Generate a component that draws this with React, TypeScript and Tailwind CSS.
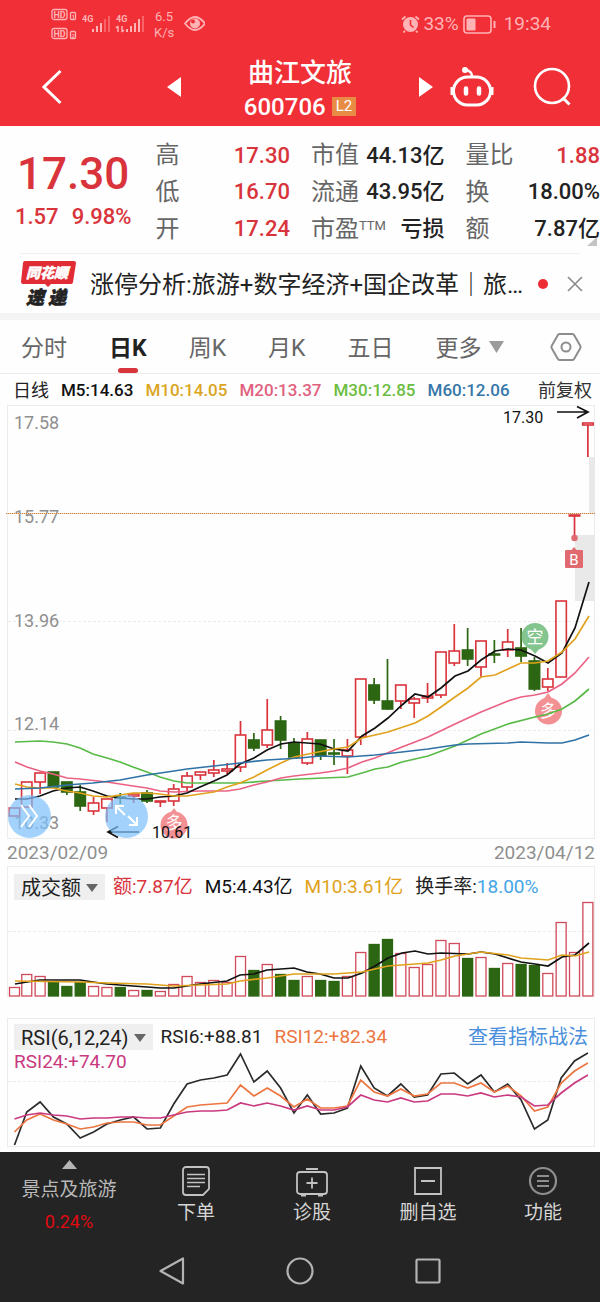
import { useState } from 'react';
import type { ReactNode } from 'react';
import clsx from 'clsx';

const RED = '#d9333b';
const GREEN = '#2d6613';

// [rising, body top, body bottom, high, low]
type Candle = [boolean, number, number, number, number];

const candles: Candle[] = [
  [true, 808, 816, 808, 816],
  [true, 782, 807, 782, 807],
  [true, 773, 782, 773, 794],
  [false, 772, 787, 772, 787],
  [false, 782, 792, 782, 795],
  [false, 792, 806, 785, 811],
  [true, 803, 811, 797, 815],
  [true, 799, 808, 799, 822],
  [false, 797, 798, 793, 804],
  [true, 794, 796, 794, 803],
  [false, 793, 801, 790, 803],
  [true, 801, 802, 801, 807],
  [true, 789, 801, 784, 806],
  [true, 776, 787, 772, 791],
  [true, 772, 775, 772, 780],
  [true, 770, 773, 760, 777],
  [true, 769, 771, 763, 774],
  [true, 735, 767, 721, 772],
  [false, 740, 748, 733, 751],
  [true, 730, 745, 699, 748],
  [false, 721, 740, 716, 749],
  [false, 743, 757, 738, 757],
  [true, 739, 763, 732, 765],
  [false, 740, 756, 740, 760],
  [false, 753, 754, 739, 765],
  [true, 750, 756, 739, 774],
  [true, 679, 737, 679, 745],
  [false, 685, 700, 678, 704],
  [false, 701, 709, 659, 710],
  [true, 685, 701, 685, 709],
  [true, 699, 703, 697, 718],
  [true, 696, 698, 683, 703],
  [true, 652, 695, 652, 698],
  [true, 651, 663, 624, 666],
  [false, 650, 659, 628, 666],
  [true, 641, 667, 641, 677],
  [false, 654, 655, 640, 663],
  [true, 642, 650, 629, 657],
  [false, 648, 656, 628, 662],
  [false, 661, 689, 657, 691],
  [true, 679, 687, 668, 691],
  [true, 601, 677, 601, 677],
  [true, 515, 516, 515, 535],
  [true, 423, 425, 423, 457],
];

const volumeTops = [
  987, 974, 976, 982, 986, 982, 986, 987, 987, 990, 990, 991, 984, 976, 982, 980, 982, 956, 970, 964, 974, 980,
  976, 980, 981, 976, 952, 944, 939, 953, 967, 964, 940, 943, 958, 957, 968, 963, 964, 965, 973, 922, 952, 902,
];

const rsi6 = [
  1145, 1112, 1102, 1117, 1124, 1138, 1132, 1124, 1120, 1117, 1129, 1128, 1104, 1084, 1080, 1078, 1075, 1054, 1082, 1071, 1088, 1113,
  1095, 1114, 1113, 1108, 1066, 1088, 1096, 1084, 1097, 1095, 1074, 1073, 1084, 1075, 1092, 1084, 1100, 1129, 1120, 1078, 1061, 1053,
];
const rsi12 = [
  1132, 1120, 1114, 1120, 1124, 1129, 1127, 1123, 1122, 1122, 1125, 1125, 1116, 1107, 1105, 1104, 1103, 1085, 1096, 1088, 1096, 1107,
  1099, 1108, 1108, 1106, 1080, 1092, 1096, 1089, 1096, 1094, 1083, 1083, 1088, 1083, 1092, 1086, 1096, 1111, 1107, 1083, 1071, 1063,
];
const rsi24 = [
  1119, 1115, 1113, 1115, 1116, 1119, 1118, 1118, 1117, 1117, 1118, 1118, 1115, 1112, 1111, 1111, 1110, 1103, 1106, 1103, 1106, 1110,
  1106, 1110, 1110, 1107, 1095, 1100, 1102, 1098, 1102, 1101, 1094, 1094, 1096, 1093, 1097, 1095, 1097, 1106, 1105, 1093, 1083, 1075,
];

const averages = [
  { color: '#58ba47', points: '15,742 40,741 53,742 67,744 80,748 93,754 107,758 120,762 133,767 147,772 160,777 174,781 187,783 214,783 240,783 267,781 300,779 348,777 362,773 375,769 388,767 402,762 428,756 455,746 481,734 508,724 535,717 548,714 562,709 575,701 589,689' },
  { color: '#ea6284', points: '15,762 27,767 40,771 53,774 67,778 80,779 107,782 133,786 147,788 160,791 174,792 200,791 227,791 240,789 254,785 267,782 281,778 294,776 320,773 334,771 348,768 362,762 375,758 402,747 428,737 455,724 481,712 508,701 521,697 535,695 548,692 562,684 575,673 589,657' },
  { color: '#111111', points: '15,799 27,799 40,796 53,791 67,788 80,787 93,791 107,796 120,798 133,799 147,799 160,797 174,796 187,793 200,787 214,781 227,775 240,764 254,758 267,750 281,744 294,742 307,743 320,744 334,749 348,751 362,736 375,728 388,718 402,705 415,694 428,697 441,688 455,676 468,671 481,660 495,651 508,649 521,650 535,656 548,663 562,653 575,628 589,582' },
  { color: '#e0a21c', points: '15,784 27,787 40,788 53,788 67,791 80,793 93,796 107,797 120,795 133,793 147,793 160,794 174,796 187,796 200,794 214,792 227,787 240,783 254,777 267,770 281,763 294,757 313,753 334,749 348,747 362,738 375,735 388,732 415,723 428,716 441,707 455,697 468,688 481,677 495,675 508,669 521,663 535,663 548,661 562,652 575,639 589,616' },
  { color: '#2f72a6', points: '15,789 40,788 67,785 93,783 120,780 147,775 174,771 187,769 214,766 240,763 267,760 300,758 320,756 348,757 375,755 402,752 428,749 455,745 468,744 508,743 521,742 548,743 562,743 575,740 589,735' },
];

const volumeAverages = [
  { color: '#111111', points: '15,984 27,982 40,980 67,980 80,980 93,982 107,984 133,986 147,987 160,988 174,988 187,986 200,984 227,981 240,975 254,974 267,970 281,969 294,968 307,972 320,974 334,978 348,978 362,973 375,966 388,958 402,953 415,951 428,954 441,953 468,954 481,952 495,954 508,958 521,962 535,964 548,966 562,957 575,955 589,943' },
  { color: '#e0a21c', points: '15,981 80,982 107,983 147,984 160,985 174,986 200,985 227,984 240,981 267,978 294,974 320,974 334,974 362,972 388,966 415,964 428,963 441,960 455,956 481,952 508,955 521,958 535,959 548,960 562,955 575,956 589,952' },
];

const slotX = (i: number) => (i === 0 ? 14.5 : 13.4 + i * 13.36);
const seriesPoints = (ys: number[]) => ys.map((y, i) => `${slotX(i)},${y}`).join(' ');

const tabs = ['分时', '日K', '周K', '月K', '五日'];

const quoteColumns = [
  [
    { label: '高', value: '17.30', up: true },
    { label: '低', value: '16.70', up: true },
    { label: '开', value: '17.24', up: true },
  ],
  [
    { label: '市值', value: '44.13亿' },
    { label: '流通', value: '43.95亿' },
    { label: '市盈', sup: 'TTM', value: '亏损' },
  ],
  [
    { label: '量比', value: '1.88', up: true },
    { label: '换', value: '18.00%' },
    { label: '额', value: '7.87亿' },
  ],
] as { label: string; value: string; sup?: string; up?: boolean }[][];

export default function App() {
  const [tab, setTab] = useState('日K');
  const [showNews, setShowNews] = useState(true);

  return (
    <div className="w-full overflow-x-hidden bg-[#fefefe] font-['Roboto','Noto_Sans_CJK_SC',sans-serif] text-[#222]">
      <header className="h-[126px] bg-[#f12f37] text-white">
        <StatusBar />
        <TitleBar />
      </header>

      <Quote />

      {showNews && (
        <section className="mx-5 flex h-[60px] items-center border-t border-[#f0f0f0]">
          <NewsLogo />
          <a href="#news" className="ml-[14px] min-w-0 flex-1 pt-[3px] text-[24px] whitespace-nowrap">
            涨停分析:旅游+数字经济+国企改革｜旅…
          </a>
          <span className="size-[10px] flex-none rounded-full bg-[#ee2d35]" />
          <button aria-label="关闭" className="ml-[18px] -mr-1 flex-none" onClick={() => setShowNews(false)}>
            <svg width="18" height="18" viewBox="0 0 18 18" stroke="#8a8a8a" strokeWidth="1.6">
              <path d="M2 2l14 14M16 2L2 16" />
            </svg>
          </button>
        </section>
      )}
      <div className="h-[7px] bg-[#f4f4f4]" />

      {/* Period tabs */}
      <nav className="flex h-[54px] items-stretch gap-[42px] border-b border-[#ebebeb] pr-[18px] pl-[21px] text-[23px] whitespace-nowrap text-[#666]">
        {tabs.map((t) => (
          <button
            key={t}
            className={clsx('relative pt-[5px]', t === tab && 'font-bold text-[#222]')}
            onClick={() => setTab(t)}
          >
            {t}
            {t === tab && (
              <span className="absolute bottom-0 left-1/2 h-[5px] w-5 -translate-x-1/2 rounded-full bg-[#d9333b]" />
            )}
          </button>
        ))}
        <button className="flex items-center gap-[7px] pt-[5px]">
          更多
          <svg className="mb-1" width="15" height="12" viewBox="0 0 15 12" fill="#9b9b9b">
            <path d="M0 0h15L7.500 12z" />
          </svg>
        </button>
        <button aria-label="设置" className="ml-auto">
          <svg width="32" height="30" viewBox="0 0 32 30" fill="none" stroke="#8d8d8d" strokeWidth="2">
            <path d="M9.500 2h13a2 2 0 0 1 1.600 1l6 10.500a3 3 0 0 1 0 3L24.100 27a2 2 0 0 1-1.600 1h-13a2 2 0 0 1-1.600-1L1.900 16.500a3 3 0 0 1 0-3L7.900 3a2 2 0 0 1 1.600-1z" />
            <circle cx="16" cy="15" r="4.500" />
          </svg>
        </button>
      </nav>

      <div className="flex h-[31px] items-center gap-3 pt-[2px] pr-2 pl-[13px] text-[17px] font-medium whitespace-nowrap">
        <span className="text-[18px] font-normal text-[#222]">日线</span>
        <span className="text-[#111]">M5:14.63</span>
        <span className="text-[#dba522]">M10:14.05</span>
        <span className="text-[#e0607e]">M20:13.37</span>
        <span className="text-[#6cbd3f]">M30:12.85</span>
        <span className="text-[#3577a8]">M60:12.06</span>
        <button className="ml-auto text-[18px] font-normal text-[#333]">前复权</button>
      </div>

      <PriceChart />
      <div className="flex h-[27px] items-center justify-between pt-[2px] pr-[5px] pl-[7px] text-[19px] text-[#8f8f8f]">
        <span>2023/02/09</span>
        <span>2023/04/12</span>
      </div>
      <VolumeChart />
      <RsiChart />
      <BottomNav />
    </div>
  );
}

function StatusBar() {
  return (
    <div className="flex h-12 items-center pr-[49px] pl-[51px] text-[#ffb3b5]">
      <svg width="154" height="32" viewBox="0 0 154 32" fill="none" stroke="currentColor">
        <g strokeWidth="1.300">
          <rect x="1" y="1.500" width="15" height="10" rx="2" />
          <rect x="1" y="20.500" width="15" height="10" rx="2" />
          <rect x="19.500" y="4.500" width="5" height="7" rx="1" />
          <rect x="19.500" y="23.500" width="5" height="7" rx="1" />
        </g>
        <g fill="currentColor" stroke="none" fontWeight="700">
          <text x="2.500" y="10" fontSize="9">HD</text>
          <text x="2.500" y="29" fontSize="9">HD</text>
          <text x="20.500" y="10.500" fontSize="6">1</text>
          <text x="20.500" y="29.500" fontSize="6">2</text>
          <text x="31" y="14" fontSize="9">4G</text>
          <text x="65" y="14" fontSize="9">4G</text>
        </g>
        <path d="M42 24v-3M46 24v-6M50 24v-9" strokeWidth="2" />
        <path d="M54 24v-13M58 24v-16M92 24v-16" strokeWidth="2" opacity="0.4" />
        <path d="M76 24v-3M80 24v-6M84 24v-9M88 24v-13" strokeWidth="2" />
        <path d="M67 18v6M67 18l-2 2M71 18v6M71 24l2-2" strokeWidth="1.500" />
        <g fill="currentColor" stroke="none" fontSize="13">
          <text x="104" y="13">6.5</text>
          <text x="103" y="29">K/s</text>
        </g>
        <path d="M134 15.500c4-5 7-6.500 10-6.500s6 1.500 10 6.500c-4 5-7 6.500-10 6.500s-6-1.500-10-6.500z" strokeWidth="1.800" />
        <circle cx="144" cy="15.500" r="5" fill="currentColor" stroke="none" />
        <circle cx="142" cy="13.500" r="2" fill="#f12f37" stroke="none" />
      </svg>
      <svg className="ml-auto" width="19" height="18" viewBox="0 0 19 18" fill="none" stroke="currentColor">
        <circle cx="9.500" cy="9.500" r="7.500" fill="currentColor" stroke="none" />
        <path d="M9.500 5v5l3 2.500" stroke="#f12f37" strokeWidth="1.600" />
        <path d="M1 4.500L4.500 1.500M18 4.500L14.500 1.500M4 16l-1.500 1.500M15 16l1.500 1.500" strokeWidth="1.800" />
      </svg>
      <span className="ml-[3px] text-[19px]">33%</span>
      <svg className="ml-1" width="33" height="19" viewBox="0 0 33 19" fill="none" stroke="currentColor" strokeWidth="1.600">
        <rect x="1" y="1" width="27" height="17" rx="3" />
        <rect x="3.500" y="3.500" width="9" height="12" rx="1" fill="currentColor" stroke="none" />
        <path d="M31.500 6v7" strokeWidth="2" />
      </svg>
      <span className="ml-2 text-[19px]">19:34</span>
    </div>
  );
}

function TitleBar() {
  return (
    <div className="grid h-[78px] grid-cols-[1fr_auto_1fr] items-center pb-px">
      <div className="flex items-center justify-between pl-[42px]">
        <button aria-label="返回">
          <svg width="20" height="36" viewBox="0 0 20 36" fill="none" stroke="#fff" strokeWidth="3">
            <path d="M18.500 2L2 18l16.500 16" />
          </svg>
        </button>
        <button aria-label="上一只">
          <svg width="14" height="20" viewBox="0 0 14 20" fill="#fff">
            <path d="M14 0v20L0 10z" />
          </svg>
        </button>
      </div>
      <div className="mx-[63px] pt-2 text-center whitespace-nowrap">
        <h1 className="text-[26px] leading-8 font-medium">曲江文旅</h1>
        <p className="flex items-center justify-center gap-[6px] text-[24px] leading-9 font-medium">
          600706
          <span className="bg-[#e88b45] px-1 text-[15px] leading-[19px] font-normal">L2</span>
        </p>
      </div>
      <div className="flex items-center pr-[28px]">
        <button aria-label="下一只">
          <svg width="14" height="20" viewBox="0 0 14 20" fill="#fff">
            <path d="M0 0v20l14-10z" />
          </svg>
        </button>
        <button aria-label="智能助手" className="ml-[17px]">
          <svg width="44" height="42" viewBox="0 0 44 42" fill="none" stroke="#fff" strokeWidth="3">
            <rect x="3.500" y="11" width="37" height="28" rx="14" />
            <path d="M2 21v8M42 21v8" />
            <path d="M22 10c0-3-2-5-6-6" strokeWidth="2.500" />
            <circle cx="15" cy="4" r="3" fill="#fff" stroke="none" />
            <path d="M16 22.500v5M29 22.500v5" strokeWidth="4.500" strokeLinecap="round" />
          </svg>
        </button>
        <button aria-label="搜索" className="ml-auto">
          <svg width="39" height="39" viewBox="0 0 39 39" fill="none" stroke="#fff" strokeWidth="2.600">
            <circle cx="19" cy="19" r="17" />
            <path d="M29.500 30.500l7 7" strokeWidth="3" />
          </svg>
        </button>
      </div>
    </div>
  );
}

function Quote() {
  return (
    <section className="relative grid h-[127px] grid-cols-[135fr_135fr_134fr_135fr] gap-[21px] overflow-hidden pt-[11px] pb-[6px] whitespace-nowrap">
      <div className="pt-2 pl-[15px] font-medium text-[#d9333b]">
        <p className="pl-[2px] text-[44px] leading-[58px]">17.30</p>
        <p className="flex gap-[13px] text-[22px] leading-7">
          <span>1.57</span>
          <span>9.98%</span>
        </p>
      </div>
      {quoteColumns.map((rows, c) => (
        <dl key={c} className="grid grid-rows-3">
          {rows.map((row) => (
            <div key={row.label} className="flex items-center justify-between">
              <dt className="flex text-[24px] text-[#666]">
                {row.label}
                {row.sup && <sup className="top-[8px] text-[13px] leading-none">{row.sup}</sup>}
              </dt>
              <dd className={clsx('text-[22px] font-medium', row.up ? 'text-[#d9333b]' : 'text-[#222]')}>
                {row.value}
              </dd>
            </div>
          ))}
        </dl>
      ))}
      <svg className="absolute right-[3px] bottom-[7px]" width="10" height="9" viewBox="0 0 10 9" fill="#c4c4c4">
        <path d="M10 0v9H0z" />
      </svg>
    </section>
  );
}

function NewsLogo() {
  return (
    <svg className="flex-none" width="56" height="48" viewBox="0 0 56 48" fontStyle="italic" fontWeight="900">
      <path d="M5 1h49a2 2 0 0 1 2 2l-3 19a2 2 0 0 1-2 2H31l-3 3-3-3H3a2 2 0 0 1-2-2L3 3a2 2 0 0 1 2-2z" fill="#e22c35" />
      <text x="6" y="18" fontSize="14" fill="#fff" stroke="#fff" strokeWidth="0.500">同花顺</text>
      <g fontSize="18" fill="#222" stroke="#222" strokeWidth="0.600">
        <text x="6" y="44">速</text>
        <text x="28" y="44">递</text>
      </g>
    </svg>
  );
}

function PriceChart() {
  return (
    <section className="relative mr-[5px] ml-[7px] border border-[#ececec]">
      <svg className="block w-full overflow-visible" viewBox="8 406 586 432">
        <g fill="#e9e9e9">
          <rect x="589" y="457" width="6" height="56" />
          <rect x="575" y="535" width="20" height="66" />
        </g>
        <path d="M8 621.500h586M8 730.500h586" stroke="#ececec" strokeDasharray="3 2" />

        <g fontSize="18" fill="#8f8f8f">
          <text x="14" y="429">17.58</text>
          <text x="14" y="523">15.77</text>
          <text x="14" y="627">13.96</text>
          <text x="14" y="730">12.14</text>
          <text x="14" y="829">10.33</text>
        </g>
        <path d="M6 513.500h589" stroke="#f3d9bf" />
        <path d="M6 513.500h589" stroke="#cf7d33" strokeDasharray="1 1" />

        {candles.map(([rising, top, bottom, high, low], i) => {
          const x = slotX(i);
          const color = rising ? RED : GREEN;
          return (
            <g key={i} stroke={color} strokeWidth="1.700">
              <path d={`M${x} ${high}V${top}M${x} ${bottom}V${low}`} />
              <rect
                x={x - 5.2}
                y={top}
                width="10.400"
                height={bottom - top}
                fill={rising ? 'none' : color}
                strokeWidth="1.600"
              />
            </g>
          );
        })}

        {/* Trade and trend signals */}
        <circle cx="574.500" cy="538" r="3.200" fill="#e06a6f" />
        <path d="M566 550h5.500l2.500-3 2.500 3h5.500a1 1 0 0 1 1 1v16a1 1 0 0 1-1 1h-16a1 1 0 0 1-1-1v-16a1 1 0 0 1 1-1z" fill="#e06a6f" />
        <text x="574" y="565" fontSize="15" fill="#fff" textAnchor="middle">B</text>
        <g textAnchor="middle" fontSize="17" opacity="0.85">
          <path d="M530 648l5 6 5-6z" fill="#6fbb7c" />
          <circle cx="535" cy="636.500" r="13.500" fill="#6fbb7c" />
          <text x="535" y="643" fill="#fff">空</text>
          <path d="M543 700l5-7 5 7z" fill="#f27d82" />
          <circle cx="548.500" cy="711" r="13.500" fill="#f27d82" />
          <text x="548.500" y="717" fill="#fff">多</text>
          <path d="M169 815l5-7 5 7z" fill="#f27d82" />
          <circle cx="174" cy="825" r="13.500" fill="#f27d82" />
          <text x="174" y="829" fill="#fff">多</text>
        </g>

        {averages.map((line) => (
          <polyline key={line.color} points={line.points} fill="none" stroke={line.color} strokeWidth="1.700" />
        ))}

        {/* Highest and lowest price marks */}
        <g fill="none" stroke="#111" strokeWidth="1.700">
          <path d="M557 412h31M577 406.500l11 5.500-11 6" />
          <path d="M139 832h-31M118 826.500l-10 5.500 10 5.500" />
        </g>
        <g fontSize="16" fill="#111">
          <text x="503" y="423">17.30</text>
          <text x="152" y="838">10.61</text>
        </g>
      </svg>
      <button aria-label="展开" className="absolute bottom-0 left-0 size-[43px] rounded-full bg-[#7cc0fb]/70">
        <svg className="size-full" viewBox="0 0 43 43" fill="none" stroke="#fff" strokeWidth="2">
          <path d="M13 10l8 11-8 11M21 10l8 11-8 11" />
        </svg>
      </button>
      <button aria-label="全屏" className="absolute bottom-0 left-[97px] size-[43px] rounded-full bg-[#7cc0fb]/70">
        <svg className="size-full" viewBox="0 0 43 43" fill="none" stroke="#fff" strokeWidth="2">
          <path d="M11 19v-8h8M11 11l9 9M32 22v8h-8M32 30l-9-9" />
        </svg>
      </button>
    </section>
  );
}

function IndicatorButton({ children }: { children: ReactNode }) {
  return (
    <button className="flex h-[26px] items-center gap-[5px] bg-[#efefef] px-[7px] pt-px text-[20px] text-[#222]">
      {children}
      <svg width="12" height="8" viewBox="0 0 12 8" fill="#666">
        <path d="M0 0h12L6 8z" />
      </svg>
    </button>
  );
}

function VolumeChart() {
  return (
    <section className="mr-[5px] ml-[7px] border border-b-0 border-[#f1ecec]">
      <div className="flex h-[35px] items-center gap-3 pt-[7px] pb-[2px] pl-[6px] text-[19px] whitespace-nowrap">
        <IndicatorButton>成交额</IndicatorButton>
        <span className="-ml-1 text-[#d9333b]">额:7.87亿</span>
        <span className="text-[#111]">M5:4.43亿</span>
        <span className="text-[#e0a21c]">M10:3.61亿</span>
        <span className="text-[#222]">
          换手率:<span className="text-[#45a5e6]">18.00%</span>
        </span>
      </div>
      <svg className="block w-full overflow-visible" viewBox="8 902 586 95">
        <path d="M8 931.500h586" stroke="#ececec" strokeDasharray="3 2" />
        {volumeTops.map((top, i) => {
          const rising = candles[i][0];
          return (
            <rect
              key={i}
              x={slotX(i) - 5}
              y={top + 0.5}
              width="10"
              height={995.5 - top}
              fill={rising ? 'none' : GREEN}
              stroke={rising ? '#cf4a5a' : GREEN}
              strokeWidth="1.300"
            />
          );
        })}
        {volumeAverages.map((line) => (
          <polyline key={line.color} points={line.points} fill="none" stroke={line.color} strokeWidth="1.700" />
        ))}
      </svg>
    </section>
  );
}

function RsiChart() {
  return (
    <section className="mt-[21px] mr-[5px] mb-[5px] ml-[7px] grid border border-[#ececec] whitespace-nowrap">
      <svg className="col-start-1 row-start-1 block w-full overflow-visible" viewBox="8 1019 586 127">
        <path d="M8 1081.500h586" stroke="#ececec" strokeDasharray="3 2" />
        <g fill="none" strokeWidth="1.700">
          <polyline points={seriesPoints(rsi6)} stroke="#2b2b2b" />
          <polyline points={seriesPoints(rsi12)} stroke="#ec7540" />
          <polyline points={seriesPoints(rsi24)} stroke="#c9397f" />
        </g>
      </svg>
      <div className="col-start-1 row-start-1 text-[19px]">
        <div className="flex items-center gap-3 pt-1 pr-[6px] pl-[6px]">
          <IndicatorButton>RSI(6,12,24)</IndicatorButton>
          <span className="-ml-1 text-[#222]">RSI6:+88.81</span>
          <span className="text-[#ec7540]">RSI12:+82.34</span>
          <a href="#strategy" className="ml-auto text-[20px] leading-[26px] text-[#4a8fdb]">查看指标战法</a>
        </div>
        <p className="pl-[6px] leading-5 text-[#c9397f]">RSI24:+74.70</p>
      </div>
    </section>
  );
}

function NavItem({ label, children }: { label: string; children: ReactNode }) {
  return (
    <button className="flex flex-col items-center pt-[13px] text-[19px] leading-7 text-[#d6d6d6]">
      <svg width="32" height="32" viewBox="0 0 32 32" fill="none" stroke="#c2c2c2" strokeWidth="1.800">
        {children}
      </svg>
      <span className="mt-[2px]">{label}</span>
    </button>
  );
}

function BottomNav() {
  return (
    <footer className="bg-[#242424]">
      <nav className="grid h-[88px] grid-cols-[138fr_116fr_116fr_116fr_114fr] whitespace-nowrap">
        <button className="flex flex-col items-center pt-2 text-[#b9b9b9]">
          <svg width="15" height="9" viewBox="0 0 15 9" fill="#b5b5b5">
            <path d="M7.500 0L15 9H0z" />
          </svg>
          <span className="mt-[7px] text-[19px] leading-7">景点及旅游</span>
          <span className="mt-1 text-[18px] leading-7 text-[#e00a10]">0.24%</span>
        </button>
        <NavItem label="下单">
          <path d="M6 2h20a3 3 0 0 1 3 3v19l-6 6H6a3 3 0 0 1-3-3V5a3 3 0 0 1 3-3z" />
          <path d="M7 9.500h18M7 13.500h18M7 17.500h18M7 21.500h13" strokeWidth="1.500" />
        </NavItem>
        <NavItem label="诊股">
          <rect x="1" y="7" width="30" height="22" rx="3" />
          <path d="M10 4h12M5 30.500h5M22 30.500h5" />
          <path d="M10.500 18h11M16 12.500v11" />
        </NavItem>
        <NavItem label="删自选">
          <path d="M3 3h26v26H3zM9 16h14" />
        </NavItem>
        <NavItem label="功能">
          <circle cx="16" cy="16" r="13" stroke="#8f8f8f" strokeWidth="2.200" />
          <path d="M10 11h12M10 16h12M10 21h12" stroke="#8f8f8f" strokeWidth="2" />
        </NavItem>
      </nav>

      {/* System navigation */}
      <div className="flex h-[62px] items-center justify-center gap-[100px] pb-px">
        <button aria-label="系统返回">
          <svg width="28" height="28" viewBox="0 0 28 28" fill="none" stroke="#b3b3b3" strokeWidth="2.200" strokeLinejoin="round">
            <path d="M25 1.500v25L2.500 14z" />
          </svg>
        </button>
        <button aria-label="主屏幕">
          <svg width="28" height="28" viewBox="0 0 28 28" fill="none" stroke="#b3b3b3" strokeWidth="2.200">
            <circle cx="14" cy="14" r="12.500" />
          </svg>
        </button>
        <button aria-label="最近任务">
          <svg width="28" height="28" viewBox="0 0 28 28" fill="none" stroke="#b3b3b3" strokeWidth="2.200">
            <rect x="2.500" y="2.500" width="23" height="23" rx="1" />
          </svg>
        </button>
      </div>
    </footer>
  );
}
